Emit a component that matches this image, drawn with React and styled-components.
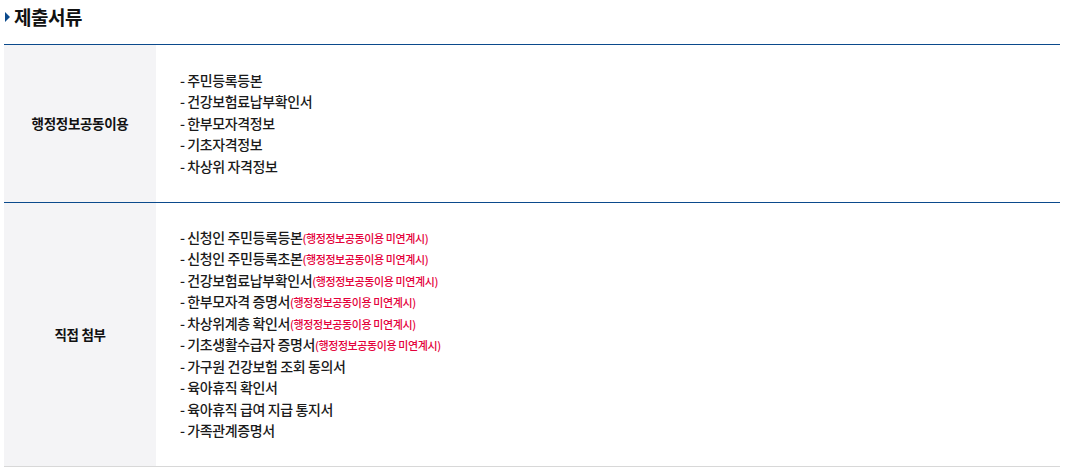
import React from 'react';
import styled, { createGlobalStyle } from 'styled-components';

const GlobalStyle = createGlobalStyle`
  body {
    margin: 0;
    background: #fff;
    font-family: "Noto Sans CJK KR", "Noto Sans", sans-serif;
    color: #222;
  }
`;

const Page = styled.div`
  padding: 0 13px 0 4px;
`;

const Title = styled.h3`
  display: flex;
  align-items: center;
  gap: 4px;
  margin: 0;
  height: 33px;
  padding-left: 1px;
  font-size: 19px;
  font-weight: 700;
  color: #111;
  letter-spacing: -0.5px;
`;

const Arrow = styled.span`
  width: 0;
  height: 0;
  border-top: 5px solid transparent;
  border-bottom: 5px solid transparent;
  border-left: 5px solid #0b4a8c;
`;

const Table = styled.div`
  margin-top: 11px;
  border-top: 1px solid #0b4a8c;
  border-bottom: 1px solid #d8d8d8;
`;

const Row = styled.div`
  display: grid;
  grid-template-columns: 152px 1fr;
  border-top: ${p => (p.$first ? 'none' : '1px solid #0b4a8c')};
`;

const Head = styled.div`
  display: flex;
  align-items: center;
  justify-content: center;
  background: #f4f4f6;
  font-size: 13.5px;
  font-weight: 700;
  color: #111;
  letter-spacing: -0.3px;
`;

const List = styled.ul`
  list-style: none;
  margin: 0;
  padding: ${p => p.$pad} 0 ${p => p.$pad} 24px;
`;

const Item = styled.li`
  font-size: 14px;
  line-height: 21.5px;
  font-weight: 500;
  color: #1a1a1a;
  letter-spacing: -0.4px;
`;

const Note = styled.span`
  font-size: 11px;
  line-height: 1;
  font-weight: 500;
  color: #e4003a;
  letter-spacing: -0.4px;
`;

const note = '(행정정보공동이용 미연계시)';

const sharedDocs = ['주민등록등본', '건강보험료납부확인서', '한부모자격정보', '기초자격정보', '차상위 자격정보'];

const directDocs = [
  { name: '신청인 주민등록등본', note: true },
  { name: '신청인 주민등록초본', note: true },
  { name: '건강보험료납부확인서', note: true },
  { name: '한부모자격 증명서', note: true },
  { name: '차상위계층 확인서', note: true },
  { name: '기초생활수급자 증명서', note: true },
  { name: '가구원 건강보험 조회 동의서' },
  { name: '육아휴직 확인서' },
  { name: '육아휴직 급여 지급 통지서' },
  { name: '가족관계증명서' },
];

export default function App() {
  return (
    <Page>
      <GlobalStyle />
      <Title>
        <Arrow />
        제출서류
      </Title>
      <Table>
        <Row $first>
          <Head>행정정보공동이용</Head>
          <List $pad="24.5px">
            {sharedDocs.map(d => (
              <Item key={d}>- {d}</Item>
            ))}
          </List>
        </Row>
        <Row>
          <Head>직접 첨부</Head>
          <List $pad="24px">
            {directDocs.map(d => (
              <Item key={d.name}>
                - {d.name}
                {d.note && <Note>{note}</Note>}
              </Item>
            ))}
          </List>
        </Row>
      </Table>
    </Page>
  );
}
